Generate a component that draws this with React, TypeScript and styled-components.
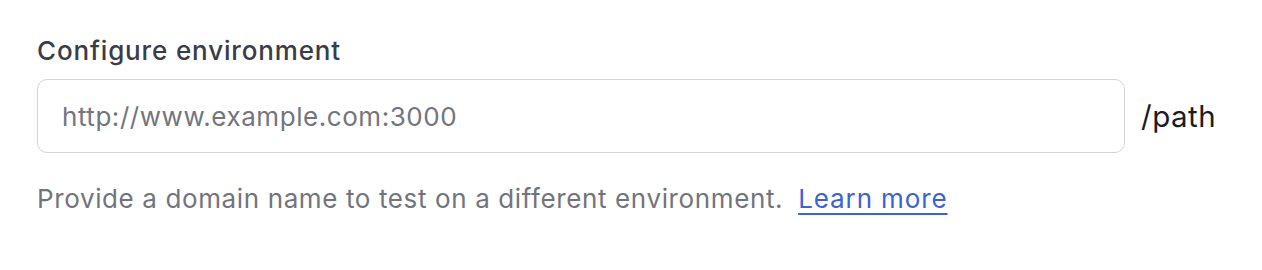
import React from 'react';
import styled, { createGlobalStyle } from 'styled-components';

const GlobalStyle = createGlobalStyle`
  body {
    margin: 0;
    background: #ffffff;
    font-family: Inter, "Noto Sans", sans-serif;
  }
`;

const Field = styled.div`
  padding: 36px 37px 0 37px;
  display: flex;
  flex-direction: column;
`;

const Label = styled.label`
  font-size: 26px;
  font-weight: 500;
  letter-spacing: 0.85px;
  color: #3a3c46;
  line-height: 30px;
  margin-bottom: 13px;
`;

const Row = styled.div`
  display: flex;
  align-items: center;
  gap: 16px;
`;

const Input = styled.input`
  width: 1088px;
  height: 74px;
  box-sizing: border-box;
  border: 1.5px solid #d4d4d6;
  border-radius: 10px;
  padding: 0 24px;
  font-family: inherit;
  font-size: 26px;
  letter-spacing: 0.55px;
  color: #1f2937;
  outline: none;
  &::placeholder {
    color: #73757d;
  }
`;

const Suffix = styled.span`
  font-size: 29.5px;
  letter-spacing: 0.5px;
  color: #1a1c24;
`;

const Help = styled.p`
  margin: 29px 0 0 0;
  font-size: 26px;
  letter-spacing: 0.62px;
  line-height: 34px;
  color: #72747c;
`;

const Link = styled.a`
  margin-left: 15px;
  color: #3b62d6;
  text-decoration: underline;
  text-underline-offset: 5px;
  letter-spacing: 0.9px;
`;

export default function App() {
  return (
    <>
      <GlobalStyle />
      <Field>
        <Label>Configure environment</Label>
        <Row>
          <Input placeholder="http://www.example.com:3000" />
          <Suffix>/path</Suffix>
        </Row>
        <Help>
          Provide a domain name to test on a different environment.
          <Link href="#">Learn more</Link>
        </Help>
      </Field>
    </>
  );
}
